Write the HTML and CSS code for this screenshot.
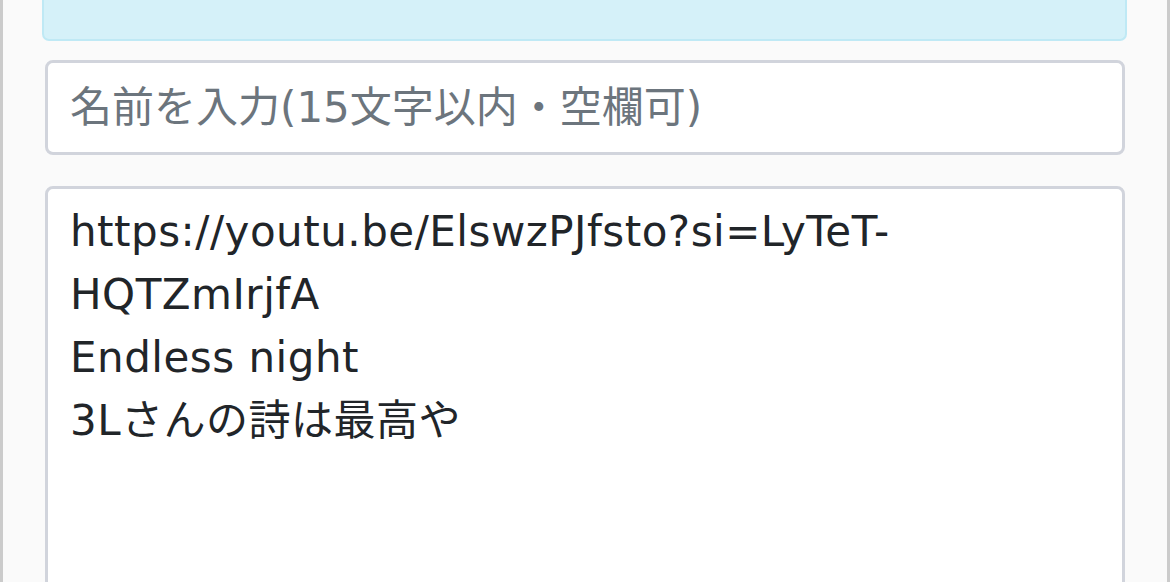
FILE: index.html
```html
<!DOCTYPE html>
<html lang="ja">
<head>
<meta charset="utf-8">
<link rel="stylesheet" href="styles.css">
</head>
<body>
<div class="page">
  <div class="alert"></div>
  <input class="name" type="text" placeholder="名前を入力(15文字以内・空欄可)">
  <textarea class="body-text">https://youtu.be/ElswzPJfsto?si=LyTeT-
HQTZmIrjfA
Endless night
3Lさんの詩は最高や</textarea>
</div>
</body>
</html>
```
FILE: styles.css
```css
html, body {
  margin: 0;
  padding: 0;
  background: #fafafa;
  overflow: hidden;
}
.page {
  box-sizing: border-box;
  width: 1170px;
  height: 582px;
  border-left: 3px solid #cbcbcb;
  border-right: 3px solid #cbcbcb;
  padding: 0 40px 0 39px;
  display: flex;
  flex-direction: column;
  font-family: "DejaVu Sans", "Noto Sans CJK JP", sans-serif;
}
.alert {
  box-sizing: border-box;
  height: 41px;
  flex-shrink: 0;
  background: #d5f1f9;
  border: 2px solid #bfe9f5;
  border-top: none;
  border-radius: 0 0 7px 7px;
}
.name {
  box-sizing: border-box;
  margin: 19px 2px 0 3px;
  height: 95px;
  flex-shrink: 0;
  border: 3px solid #d1d4dc;
  border-radius: 8px;
  background: #fff;
  padding: 0 22px;
  font: 42px "DejaVu Sans", "Noto Sans CJK JP", sans-serif;
  color: #212529;
  outline: none;
}
.name::placeholder {
  color: #6c757d;
  opacity: 1;
}
.body-text {
  box-sizing: border-box;
  margin: 31px 2px 0 3px;
  height: 500px;
  flex-shrink: 0;
  border: 3px solid #d1d4dc;
  border-radius: 8px;
  background: #fff;
  padding: 11px 22px;
  font: 42px/63px "DejaVu Sans", "Noto Sans CJK JP", sans-serif;
  letter-spacing: 0.5px;
  color: #212529;
  resize: none;
  outline: none;
  overflow: hidden;
}
```
